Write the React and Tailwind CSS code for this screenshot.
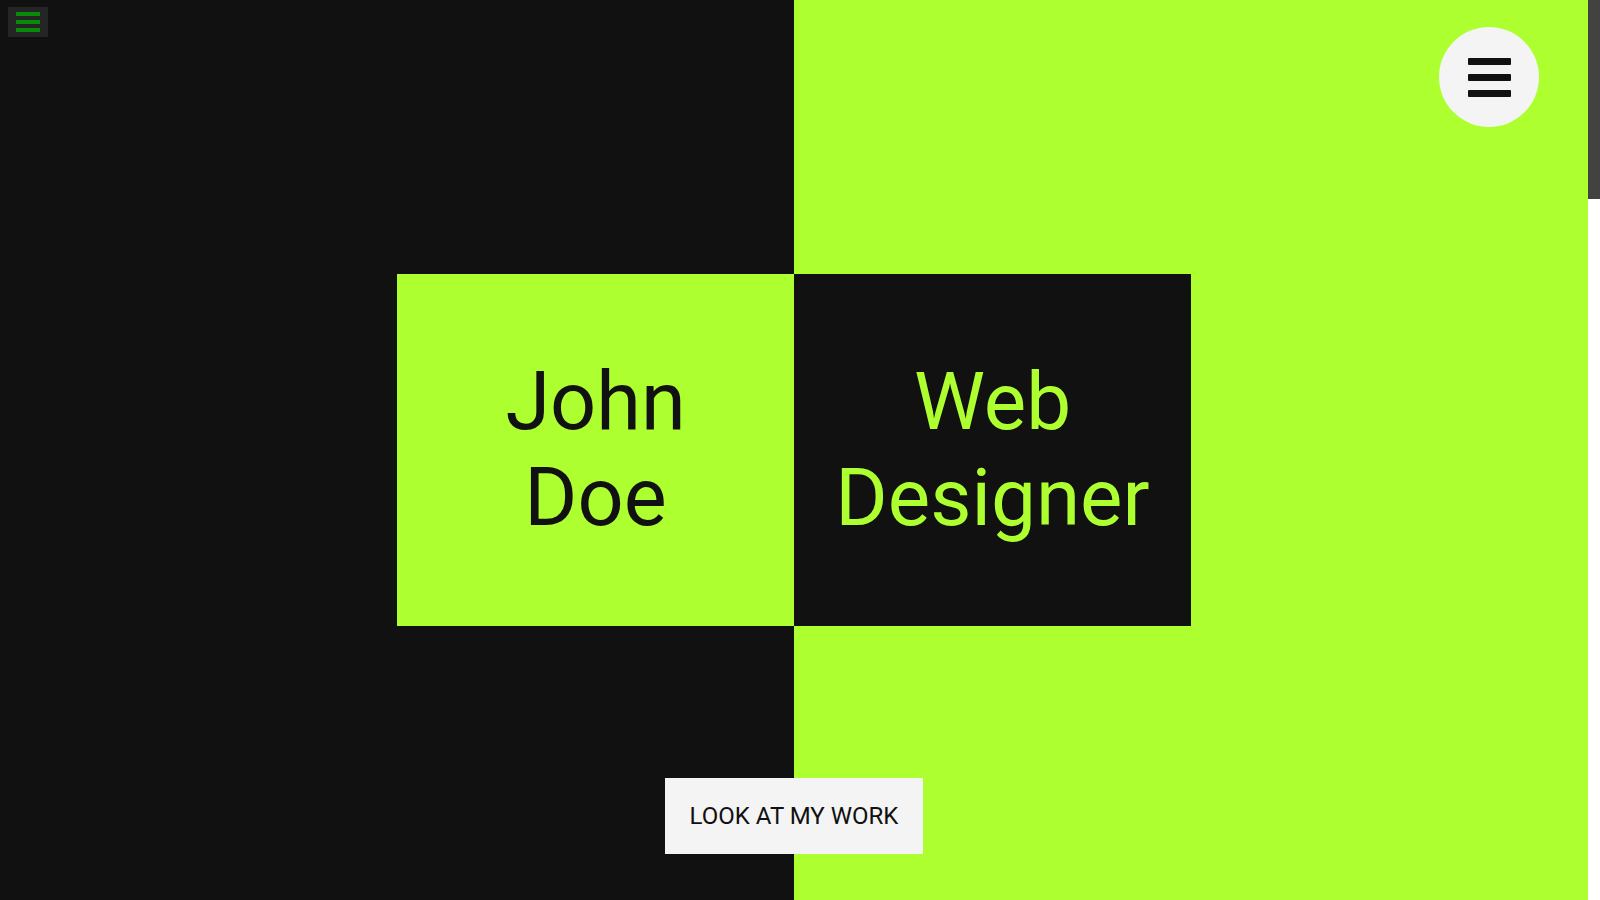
import React from 'react';

const Bars = ({ className }) => (
  <div className="flex flex-col gap-[9px]">
    <span className={`block h-[7px] w-[43px] ${className}`} />
    <span className={`block h-[7px] w-[43px] ${className}`} />
    <span className={`block h-[7px] w-[43px] ${className}`} />
  </div>
);

const Hero = () => (
  <section className="relative h-screen flex flex-col items-center bg-[linear-gradient(to_right,#111111_50%,#adff2f_50%)]">
    {/* mobile nav toggle */}
    <button className="absolute left-2 top-[7px] w-10 h-[30px] bg-[#252525] flex flex-col items-center justify-center gap-1">
      <span className="block w-6 h-1 bg-[#0a8a0a]" />
      <span className="block w-6 h-1 bg-[#0a8a0a]" />
      <span className="block w-6 h-1 bg-[#0a8a0a]" />
    </button>

    {/* main menu */}
    <button className="absolute right-[49px] top-[27px] w-[100px] h-[100px] rounded-full bg-[#f4f4f4] flex items-center justify-center">
      <Bars className="bg-[#111111] rounded-[1px]" />
    </button>

    <div className="flex-1" />

    <div className="flex w-1/2">
      <div className="w-1/2 bg-[#adff2f] py-[80px] text-center text-[81px] leading-[96px] text-[#111111]">
        <span className="block">John</span>
        <span className="block">Doe</span>
      </div>
      <div className="w-1/2 bg-[#111111] py-[80px] text-center text-[80px] leading-[96px] text-[#adff2f]">
        <span className="block">Web</span>
        <span className="block">Designer</span>
      </div>
    </div>

    <div className="flex-1 flex flex-col justify-end">
      <a href="#work" className="block mb-[46px] bg-[#f4f4f4] px-[25px] py-[24px] text-[24px] leading-[28px] text-[#111111]">
        LOOK AT MY WORK
      </a>
    </div>
  </section>
);

export default function App() {
  return (
    <div className="flex h-screen overflow-hidden font-['Roboto',sans-serif]">
      <main className="flex-1 h-screen overflow-y-auto [scrollbar-width:none] [&::-webkit-scrollbar]:hidden">
        <Hero />
      </main>
      {/* page scrollbar */}
      <div className="w-3 h-screen bg-white flex flex-col">
        <div className="h-[199px] bg-[#424242]" />
      </div>
    </div>
  );
}
